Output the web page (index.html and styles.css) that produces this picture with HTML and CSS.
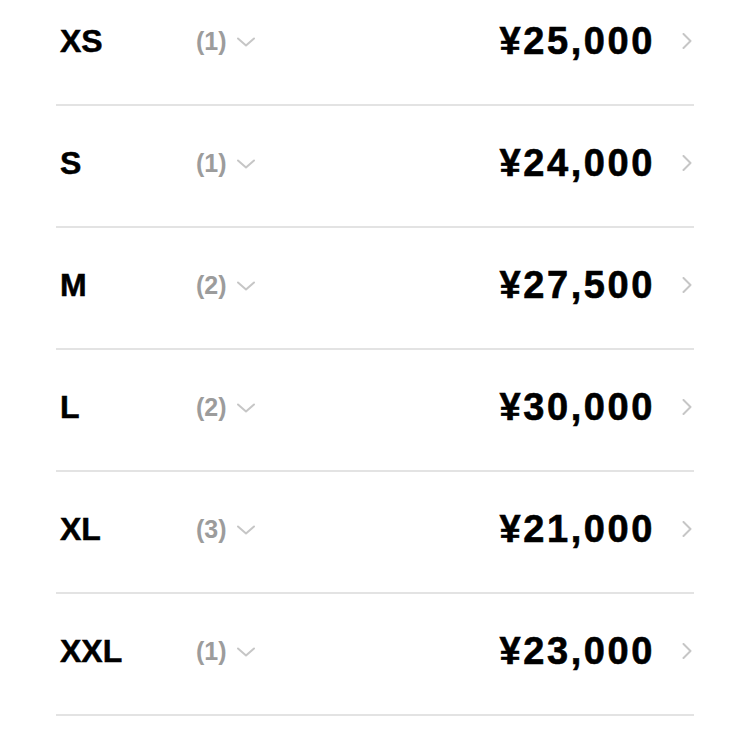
FILE: index.html
```html
<!DOCTYPE html>
<html lang="ja">
<head>
<meta charset="utf-8">
<link rel="stylesheet" href="styles.css">
</head>
<body>
<ul class="list">
  <li class="row"><span class="size">XS</span><span class="count">(1)<svg class="down" viewBox="0 0 18 10"><path d="M1 1.5 L9 8.5 L17 1.5"/></svg></span><span class="price">¥25,000</span><svg class="right" viewBox="0 0 10 16"><path d="M1.5 1 L8.5 8 L1.5 15"/></svg></li>
  <li class="row"><span class="size">S</span><span class="count">(1)<svg class="down" viewBox="0 0 18 10"><path d="M1 1.5 L9 8.5 L17 1.5"/></svg></span><span class="price">¥24,000</span><svg class="right" viewBox="0 0 10 16"><path d="M1.5 1 L8.5 8 L1.5 15"/></svg></li>
  <li class="row"><span class="size">M</span><span class="count">(2)<svg class="down" viewBox="0 0 18 10"><path d="M1 1.5 L9 8.5 L17 1.5"/></svg></span><span class="price">¥27,500</span><svg class="right" viewBox="0 0 10 16"><path d="M1.5 1 L8.5 8 L1.5 15"/></svg></li>
  <li class="row"><span class="size">L</span><span class="count">(2)<svg class="down" viewBox="0 0 18 10"><path d="M1 1.5 L9 8.5 L17 1.5"/></svg></span><span class="price">¥30,000</span><svg class="right" viewBox="0 0 10 16"><path d="M1.5 1 L8.5 8 L1.5 15"/></svg></li>
  <li class="row"><span class="size">XL</span><span class="count">(3)<svg class="down" viewBox="0 0 18 10"><path d="M1 1.5 L9 8.5 L17 1.5"/></svg></span><span class="price">¥21,000</span><svg class="right" viewBox="0 0 10 16"><path d="M1.5 1 L8.5 8 L1.5 15"/></svg></li>
  <li class="row"><span class="size">XXL</span><span class="count">(1)<svg class="down" viewBox="0 0 18 10"><path d="M1 1.5 L9 8.5 L17 1.5"/></svg></span><span class="price">¥23,000</span><svg class="right" viewBox="0 0 10 16"><path d="M1.5 1 L8.5 8 L1.5 15"/></svg></li>
</ul>
</body>
</html>
```
FILE: styles.css
```css
html, body {
  margin: 0;
  padding: 0;
  background: #fff;
  overflow: hidden;
}
body {
  font-family: "Liberation Sans", Arial, sans-serif;
  color: #000;
}
.list {
  list-style: none;
  margin: -16px 56px 0 56px;
  padding: 0;
}
.row {
  display: flex;
  align-items: center;
  height: 114px;
  padding-bottom: 6px;
  border-bottom: 2px solid #e3e3e3;
}
.size {
  width: 136px;
  padding-left: 4px;
  font-size: 32px;
  font-weight: bold;
  -webkit-text-stroke: 0.5px #000;
}
.count {
  display: flex;
  align-items: center;
  font-size: 25px;
  font-weight: bold;
  color: #9c9c9c;
}
.down {
  width: 18px;
  height: 10px;
  margin-left: 10px;
  margin-top: 1px;
}
.down path, .right path {
  fill: none;
  stroke: #c6c6c6;
  stroke-width: 2;
  stroke-linecap: round;
  stroke-linejoin: round;
}
.price {
  margin-left: auto;
  font-size: 38px;
  font-weight: bold;
  letter-spacing: 2.6px;
  margin-right: 27px;
  -webkit-text-stroke: 0.6px #000;
}
.right {
  width: 10px;
  height: 16px;
  margin-right: 2px;
}
```
